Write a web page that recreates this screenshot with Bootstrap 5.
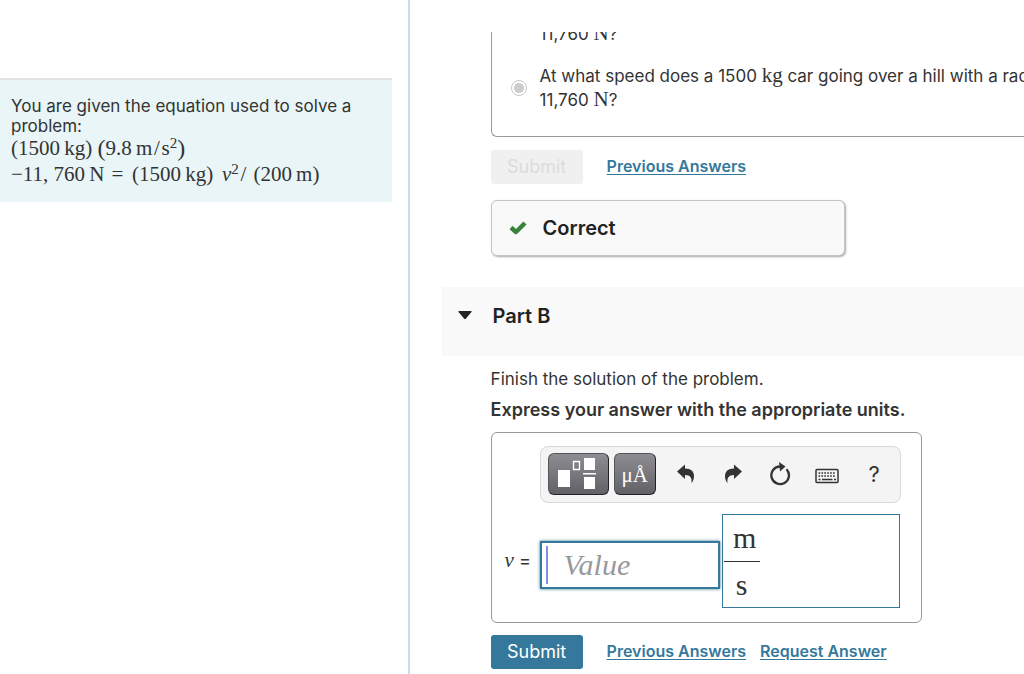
<!DOCTYPE html>
<html lang="en">
<head>
<meta charset="utf-8">
<meta name="viewport" content="width=device-width, initial-scale=1">
<title>Part B</title>
<link href="https://cdn.jsdelivr.net/npm/bootstrap@5.3.0/dist/css/bootstrap.min.css" rel="stylesheet">
<style>
  body { font-family: Inter, "Noto Sans", sans-serif; font-size: 17px; line-height: 24px; color: #333; background: #fff; }
  .tex { font-family: "Liberation Serif", serif; font-size: 21px; line-height: 1; }
  .tex sup { font-size: 15px; line-height: 1; top: 0; vertical-align: 7px; }
  .side { flex: 0 0 40%; border-right: 2px solid #cfdbe9; padding: 78px 16px 0 0; }
  .given { background: #e9f5f7; border-top: 2px solid #dfe3e4; padding: 16px 11px 14px; line-height: 20px; }
  .given .tex { white-space: nowrap; line-height: 24px; }
  .given .tex-tall { line-height: 28px; }
  .paren { font-size: 24px; line-height: 1; vertical-align: -1px; }
  .work { min-width: 0; padding: 32px 0 0 32px; }
  .inset { padding-left: 49px; }
  .choices { overflow: hidden; }
  .choice-box { margin-top: -11px; border: 1px solid #999; border-right: 0; border-radius: 0 0 0 6px; padding: 0 0 24px 19px; gap: 18px; }
  .choice-box label { white-space: nowrap; }
  .choice-box .tail { padding-left: 29px; }
  .choice-box input { appearance: none; width: 16px; height: 16px; margin: 0 13px 0 0; border: 1px solid #c8c8c8; border-radius: 50%; background: #fff; flex: none; }
  .choice-box input:checked { background: radial-gradient(circle, #cdcdcd 0 5px, #fff 5px); }
  .actions { gap: 24px; height: 34px; font-size: 16px; }
  .checked-row { margin: 13px 0 16px; }
  .submit-row { margin-top: 12px; }
  .btn-go { width: 92px; height: 34px; border: 0; border-radius: 3px; padding: 0; font-size: 18px; line-height: 34px; background: #35789b; color: #fff; }
  .btn-go:hover { background: #2b6583; color: #fff; }
  .btn-go:disabled { background: #f0f0f0; color: #dcdcdc; opacity: 1; }
  .actions a { color: #35789b; font-weight: 600; text-underline-offset: 2px; padding-bottom: 2px; }
  .links { gap: 14px; }
  .result { max-width: 354px; height: 56px; border: 1px solid #c4c4c4; border-radius: 6px; background: #f9f9f9; box-shadow: 1px 1px 2px #aaa; padding: 0 17px; gap: 16px; font-size: 20px; font-weight: 600; color: #222; }
  .part-head { margin: 31px 0 11px; height: 69px; background: #f9f9f9; padding: 0 16px 12px; }
  .part-head button { border: 0; background: none; padding: 0; gap: 21px; font-size: 20px; font-weight: 600; color: #222; }
  .prompt { margin-bottom: 7px; }
  .directions { margin-bottom: 10px; font-size: 18px; font-weight: 600; }
  .answer { max-width: 431px; border: 1px solid #999; border-radius: 6px; padding: 13px 20px 14px 12px; }
  .tools { margin-left: 36px; height: 57px; border: 1px solid #d8d8d8; border-radius: 8px; background: #f4f4f4; padding: 0 7px 2px; }
  .tools button { border: 0; background: none; padding: 0; height: 42px; display: flex; align-items: center; justify-content: center; flex: none; color: #333; }
  .tools .key { background: linear-gradient(#8e8d93, #626166); border: 1px solid #55555a; border-right-color: #222; border-bottom-color: #222; border-radius: 6px; color: #fff; }
  .tools .key-wide { width: 61px; margin-right: 5px; }
  .tools .key-slim { width: 42px; margin-right: 7px; padding-top: 4px; font: 21px "Liberation Serif", serif; }
  .tools .flat { width: 47px; font-size: 22px; }
  .fields { margin-top: 11px; }
  .field-name { width: 36px; font-size: 18px; padding-left: 1px; }
  .value-box { width: 180px; height: 48px; margin-top: 8px; border: 2px solid #35789b; box-shadow: 0 0 3px #35789b; padding: 4px; }
  .value-box .caret { width: 2px; height: 38px; flex: none; background: #7f93e6; }
  .value-box input { min-width: 0; border: 0; outline: 0; padding: 0 0 0 16px; background: none; font: italic 30px/36px "Liberation Serif", serif; }
  .value-box input::placeholder { color: #999; opacity: 1; }
  .unit-box { width: 178px; height: 94px; border: 1px solid #35789b; margin-left: 2px; padding: 0 1px; font: 30px/46px "Liberation Serif", serif; }
  .fraction { width: 36px; text-align: center; }
  .fraction .over { border-bottom: 1px solid #333; padding-left: 6px; }
</style>
</head>
<body>
<div class="d-flex min-vh-100 overflow-hidden">
  <aside class="side">
    <div class="given">
      <div>You are given the equation used to solve a problem:</div>
      <div class="tex">(1500&#8201;kg) <span class="paren">(</span>9.8&#8201;m&#8202;/&#8202;s<sup>2</sup><span class="paren">)</span></div>
      <div class="tex tex-tall">−11,&#8197;760&#8201;N&#8196;=&#8196;&#8202;(1500&#8201;kg)&#8196;&#8202;<i>v</i><sup>2</sup>&#8202;/&#8196;(200&#8201;m)</div>
    </div>
  </aside>
  <main class="work flex-fill">
    <div class="inset choices">
      <div class="choice-box d-flex flex-column">
        <div class="tail">11,760 <span class="tex">N</span>?</div>
        <div class="d-flex align-items-center">
          <input type="radio" name="choice" id="c2" checked disabled>
          <label for="c2">At what speed does a 1500 <span class="tex">kg</span> car going over a hill with a radius<br>11,760 <span class="tex">N</span>?</label>
        </div>
      </div>
    </div>
    <div class="inset">
      <div class="actions checked-row d-flex align-items-center">
        <button class="btn btn-go" type="button" disabled>Submit</button>
        <a href="#">Previous Answers</a>
      </div>
      <div class="result d-flex align-items-center">
        <svg width="18" height="16" viewBox="0 0 18 16" aria-hidden="true"><path d="M2 7.500l5 4.500L16 3" fill="none" stroke="#37833b" stroke-width="4.400" stroke-linejoin="round"/></svg>
        <span>Correct</span>
      </div>
    </div>
    <div class="part-head d-flex align-items-center">
      <button class="d-flex align-items-center" type="button" aria-expanded="true">
        <svg width="14" height="9" viewBox="0 0 14 9" aria-hidden="true"><path d="M1 0h12q1 0 .5 1L8 7.500q-1 1-2 0L.5 1Q0 0 1 0z" fill="#222"/></svg>
        <span>Part B</span>
      </button>
    </div>
    <div class="inset">
      <p class="prompt">Finish the solution of the problem.</p>
      <p class="directions">Express your answer with the appropriate units.</p>
      <div class="answer">
        <div class="tools d-flex align-items-center">
          <button class="key key-wide" type="button" aria-label="Templates">
            <svg width="42" height="34" viewBox="0 0 42 34" fill="#fff"><path d="M1 13h12v17H1zM27 1h11v12H27zM27 20h11v12H27zM26 16h13v1.500H26z"/><path d="M16.500 4.500h6v8h-6z" fill="none" stroke="#fff" stroke-width="1.300"/></svg>
          </button>
          <button class="key key-slim" type="button" aria-label="Symbols">μÅ</button>
          <button class="flat" type="button" aria-label="Undo"><svg width="18" height="20" viewBox="0 0 18 20" fill="#333"><path d="M0 7.500L8 .5v4c6 0 9 3 9 7.500 0 3-1 5.500-2.500 7 .6-5-1-8-6.500-8v4z"/></svg></button>
          <button class="flat" type="button" aria-label="Redo"><svg width="18" height="20" viewBox="0 0 18 20" fill="#333"><path d="M18 7.500L10 .5v4C4 4.500 1 7.500 1 12c0 3 1 5.500 2.500 7-.6-5 1-8 6.500-8v4z"/></svg></button>
          <button class="flat" type="button" aria-label="Reset"><svg width="22" height="24" viewBox="0 0 22 24"><path d="M17.500 7.200A8.800 8.800 0 1 1 11 4.500" fill="none" stroke="#333" stroke-width="2.300"/><path d="M10 0l6.500 4.500L11 9.500z" fill="#333"/></svg></button>
          <button class="flat" type="button" aria-label="Keyboard"><svg class="mt-1" width="24" height="16" viewBox="0 0 24 16"><rect x="1" y="1.500" width="22" height="13" rx="1" fill="none" stroke="#333" stroke-width="1.500"/><path d="M3.500 5h17M3.500 8h17" stroke="#333" stroke-width="1.700" stroke-dasharray="1.700 1.200"/><path d="M3.500 11.500h2M7 11.500h10.500M19 11.500h2" stroke="#333" stroke-width="1.500"/></svg></button>
          <button class="flat" type="button" aria-label="Help">?</button>
        </div>
        <div class="fields d-flex align-items-center">
          <label class="field-name" for="value"><i class="tex">v</i> =</label>
          <div class="value-box d-flex align-items-center">
            <span class="caret"></span>
            <input id="value" type="text" placeholder="Value">
          </div>
          <div class="unit-box" role="textbox" aria-label="Units" contenteditable="true">
            <div class="fraction"><div class="over">m</div><div>s</div></div>
          </div>
        </div>
      </div>
      <div class="actions submit-row d-flex align-items-center">
        <button class="btn btn-go" type="button">Submit</button>
        <div class="links d-flex"><a href="#">Previous Answers</a><a href="#">Request Answer</a></div>
      </div>
    </div>
  </main>
</div>
<script src="https://cdn.jsdelivr.net/npm/bootstrap@5.3.0/dist/js/bootstrap.bundle.min.js"></script>
</body>
</html>
